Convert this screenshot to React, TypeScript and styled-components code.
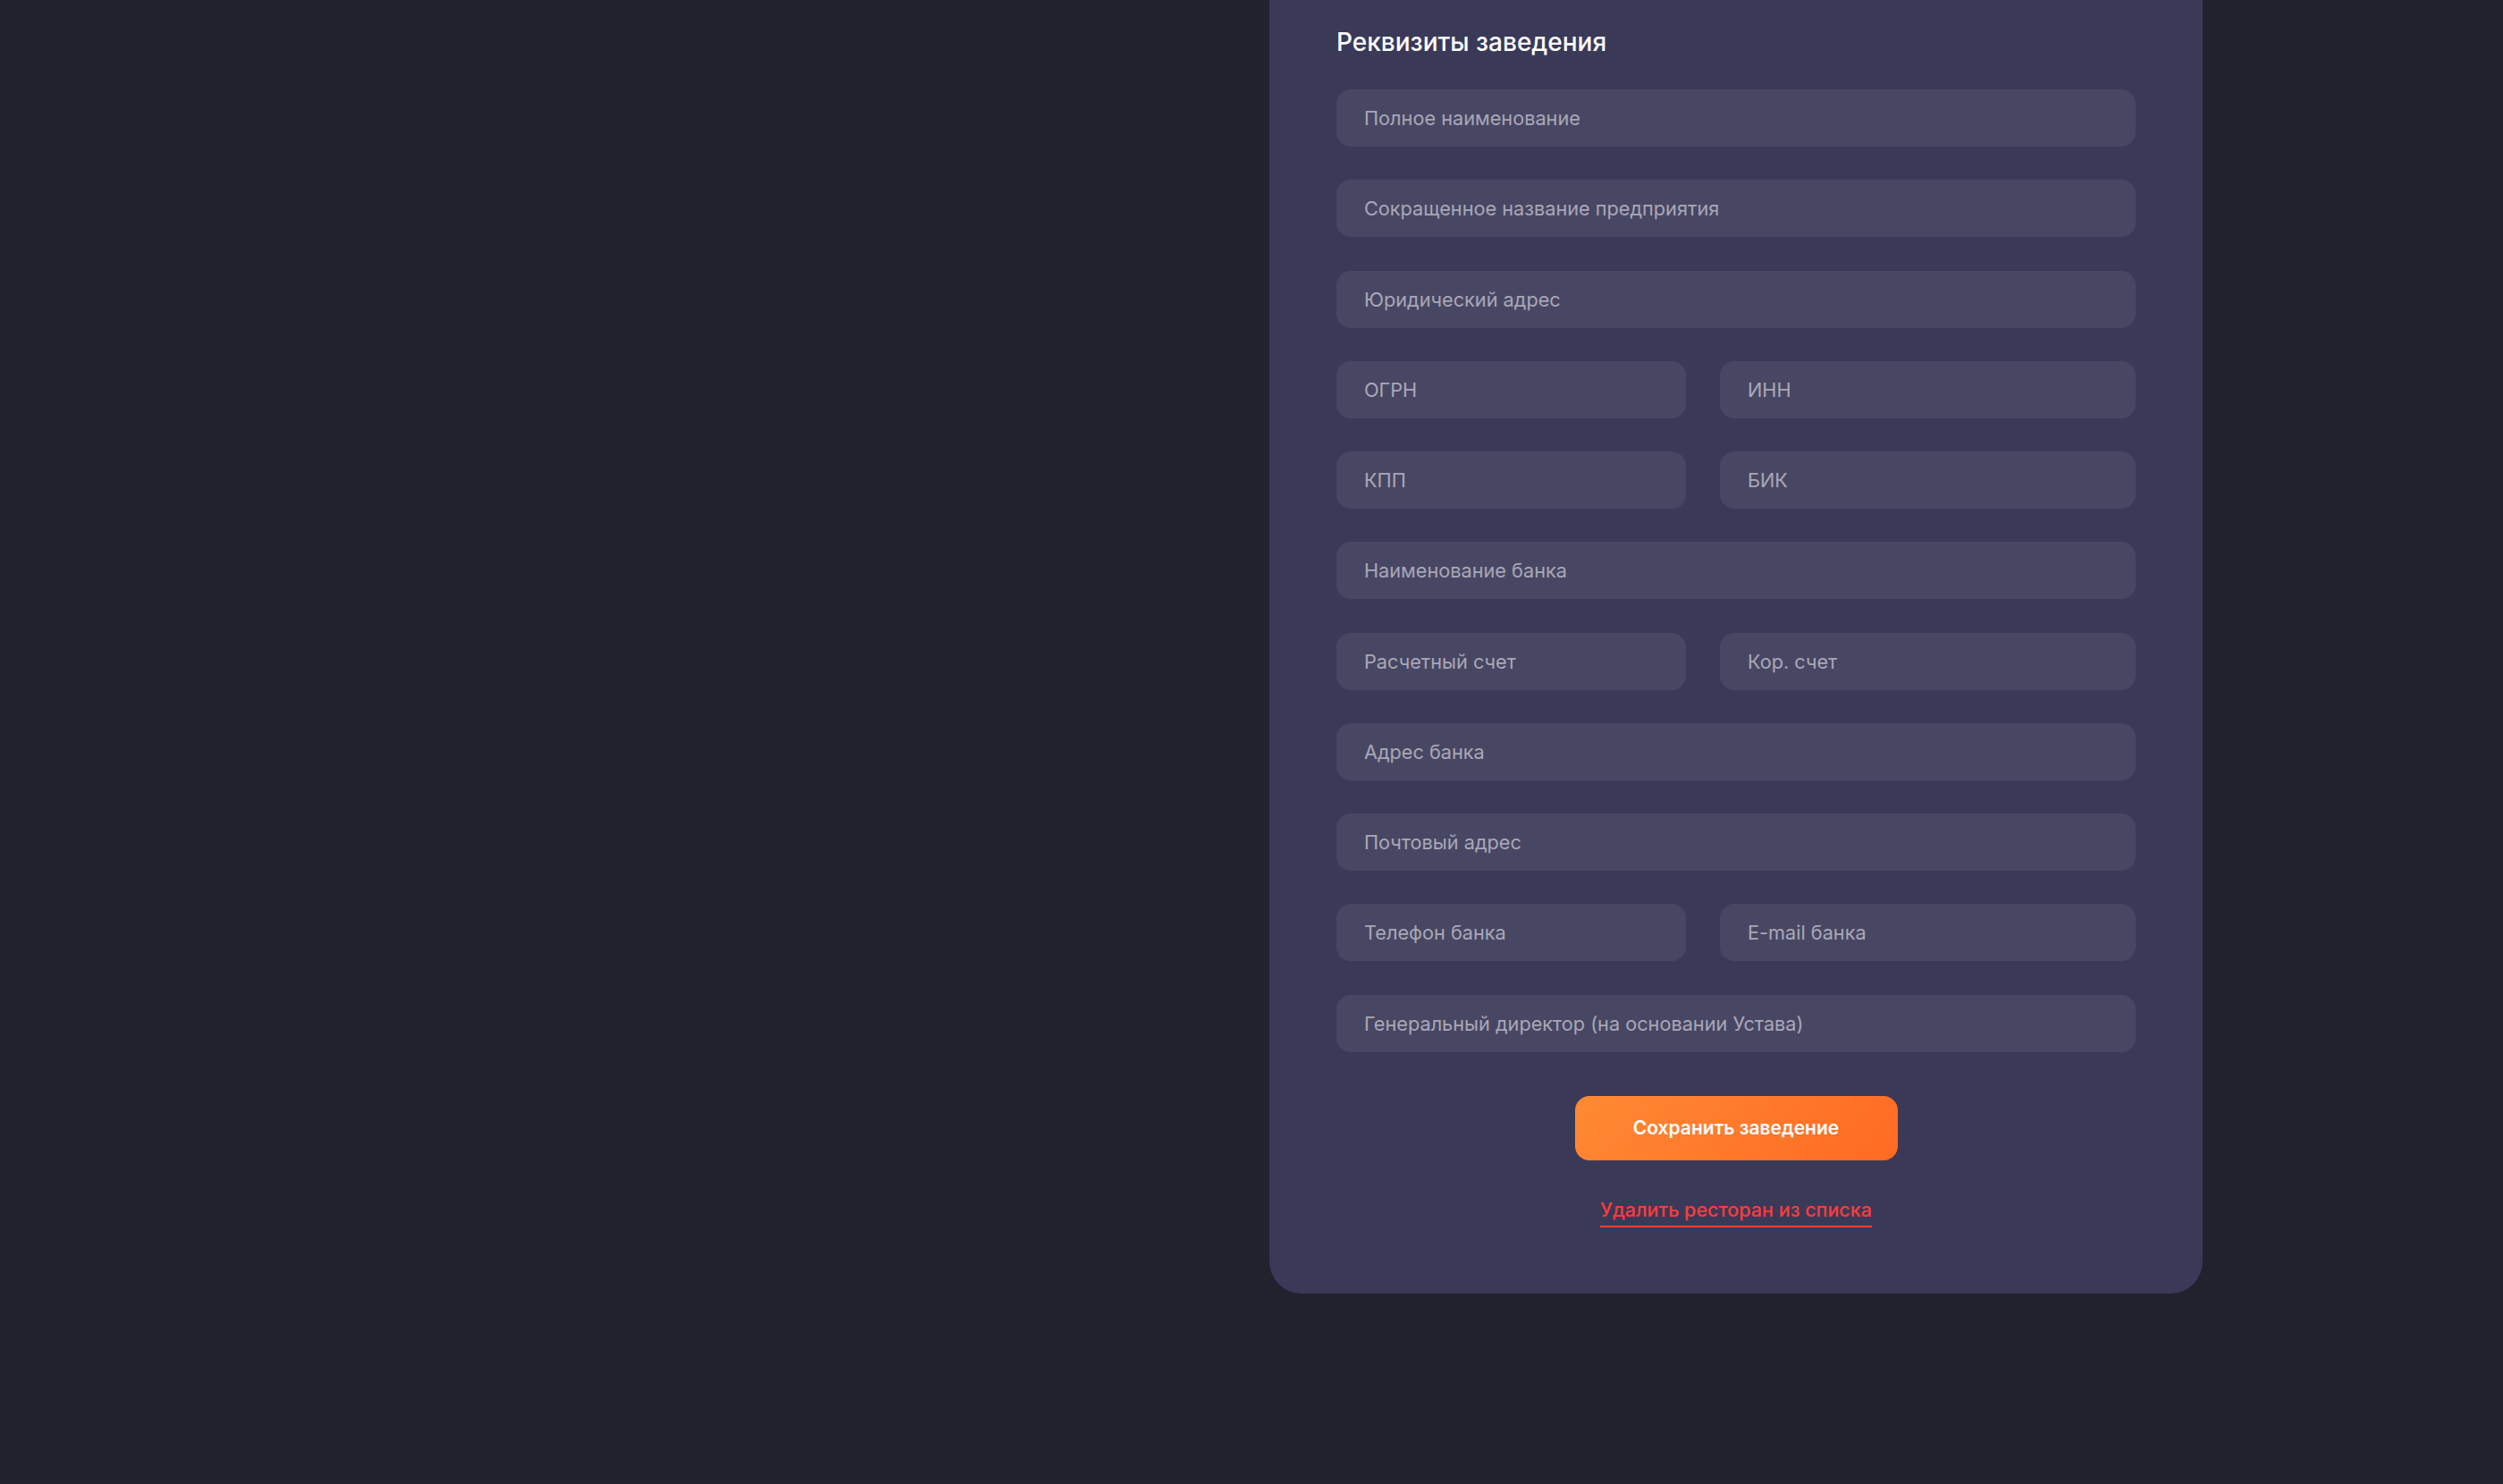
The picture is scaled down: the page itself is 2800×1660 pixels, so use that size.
import React from "react";
import styled, { createGlobalStyle } from "styled-components";

const GlobalStyle = createGlobalStyle`
    html, body {
        margin: 0;
        padding: 0;
        background-color: #22212e;
    }
    * {
        box-sizing: border-box;
    }
`;

const Page = styled.div`
    min-height: 100vh;
    padding-left: 1420px;
    background-color: #22212e;
    font-family: 'Inter', 'Noto Sans', sans-serif;
`;

const Card = styled.form`
    width: 1044px;
    padding: 31px 75px 74px;
    background-color: #3b3958;
    border-radius: 0 0 36px 36px;
    display: flex;
    flex-direction: column;
`;

const Title = styled.h2`
    margin: 0 0 36px;
    font-size: 28px;
    line-height: 33px;
    font-weight: 500;
    color: #ffffff;
`;

const Fields = styled.div`
    display: flex;
    flex-direction: column;
    gap: 37.25px;
`;

const Pair = styled.div`
    display: grid;
    grid-template-columns: 391px 1fr;
    gap: 38px;
`;

const Field = styled.input`
    width: 100%;
    height: 64px;
    padding: 0 31px;
    border: none;
    outline: none;
    border-radius: 16px;
    background-color: #484763;
    color: #ffffff;
    font-family: 'Inter', 'Noto Sans', sans-serif;
    font-size: 21.7px;

    &::placeholder {
        color: #a8a7b8;
    }
`;

const Actions = styled.div`
    display: flex;
    flex-direction: column;
    align-items: center;
    margin-top: 49px;
`;

const SaveButton = styled.button`
    width: 361px;
    height: 72px;
    border: none;
    border-radius: 16px;
    background: linear-gradient(135deg, #ff8a34 0%, #ff6a22 100%);
    color: #ffffff;
    font-family: 'Inter', 'Noto Sans', sans-serif;
    font-size: 21px;
    font-weight: 600;
    cursor: pointer;
`;

const DeleteLink = styled.a`
    margin-top: 42px;
    padding-bottom: 5px;
    border-bottom: 2px solid #ff3b3b;
    color: #ff3b3b;
    font-size: 21.5px;
    font-weight: 500;
    line-height: 26px;
    text-decoration: none;
    cursor: pointer;
`;

const App: React.FC = () => {
    return (
        <>
            <GlobalStyle />
            <Page>
                <Card onSubmit={(e) => e.preventDefault()}>
                    <Title>Реквизиты заведения</Title>
                    <Fields>
                        <Field placeholder="Полное наименование" />
                        <Field placeholder="Сокращенное название предприятия" />
                        <Field placeholder="Юридический адрес" />
                        <Pair>
                            <Field placeholder="ОГРН" />
                            <Field placeholder="ИНН" />
                        </Pair>
                        <Pair>
                            <Field placeholder="КПП" />
                            <Field placeholder="БИК" />
                        </Pair>
                        <Field placeholder="Наименование банка" />
                        <Pair>
                            <Field placeholder="Расчетный счет" />
                            <Field placeholder="Кор. счет" />
                        </Pair>
                        <Field placeholder="Адрес банка" />
                        <Field placeholder="Почтовый адрес" />
                        <Pair>
                            <Field placeholder="Телефон банка" />
                            <Field placeholder="E-mail банка" />
                        </Pair>
                        <Field placeholder="Генеральный директор (на основании Устава)" />
                    </Fields>
                    <Actions>
                        <SaveButton type="submit">Сохранить заведение</SaveButton>
                        <DeleteLink>Удалить ресторан из списка</DeleteLink>
                    </Actions>
                </Card>
            </Page>
        </>
    );
};

export default App;
